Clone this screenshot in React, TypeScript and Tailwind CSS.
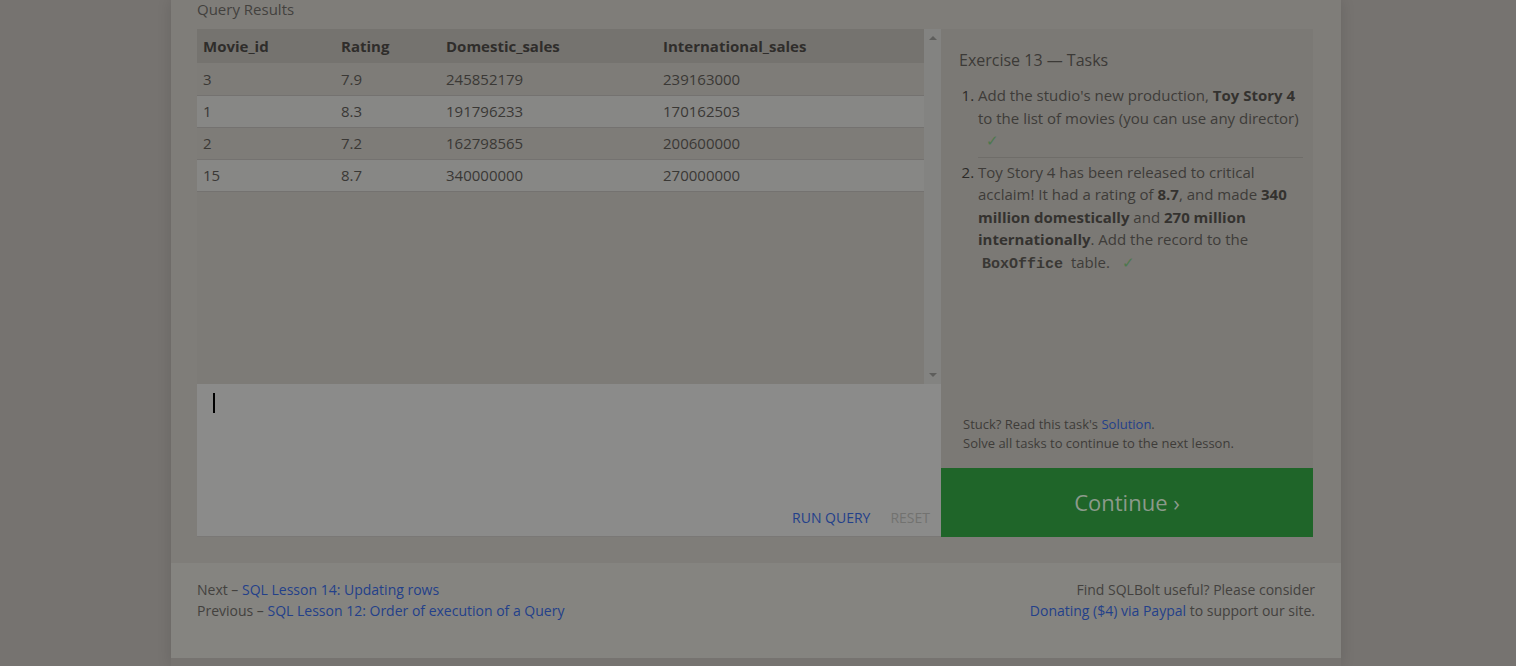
import React from 'react';

const rows = [
  ['3', '7.9', '245852179', '239163000'],
  ['1', '8.3', '191796233', '170162503'],
  ['2', '7.2', '162798565', '200600000'],
  ['15', '8.7', '340000000', '270000000'],
];

const Check = () => <span className="text-[#4d784d] ml-[8px]">✓</span>;

export default function App() {
  return (
    <div className="min-h-screen bg-[#767370] flex justify-center pr-[4px] font-['Open_Sans',sans-serif] text-[#3a3835]">
      <div className="w-[1170px] flex flex-col shadow-[0_0_14px_rgba(0,0,0,0.12)]">
        {/* Main exercise area */}
        <div className="bg-[#7f7d79] pl-[26px] pr-[28px] pb-[26px]">
          <div className="text-[15px] leading-[18px] h-[29px] text-[#43413e]">Query Results</div>
          <div className="flex">
            <div className="w-[744px] flex flex-col">
              <div className="h-[355px] flex">
                <div className="flex-1 bg-[#7d7b77]">
                  <table className="w-full text-[15px] border-collapse">
                    <thead>
                      <tr className="bg-[#75736f] h-[34px] text-left text-[#2f2d2b]">
                        <th className="font-bold pl-[6px] w-[144px]">Movie_id</th>
                        <th className="font-bold w-[105px]">Rating</th>
                        <th className="font-bold w-[217px]">Domestic_sales</th>
                        <th className="font-bold">International_sales</th>
                      </tr>
                    </thead>
                    <tbody>
                      {rows.map((r, i) => (
                        <tr key={i} className={`h-[32px] border-b border-[#747270] ${i % 2 ? 'bg-[#878785]' : 'bg-[#7e7c78]'}`}>
                          <td className="pl-[6px]">{r[0]}</td>
                          <td>{r[1]}</td>
                          <td>{r[2]}</td>
                          <td>{r[3]}</td>
                        </tr>
                      ))}
                    </tbody>
                  </table>
                </div>
                {/* scrollbar */}
                <div className="w-[17px] bg-[#838381] flex flex-col items-center justify-between py-[7px]">
                  <div className="w-0 h-0 border-x-[4px] border-x-transparent border-b-[4px] border-b-[#5e5e5c]" />
                  <div className="w-0 h-0 border-x-[4px] border-x-transparent border-t-[4px] border-t-[#5e5e5c]" />
                </div>
              </div>
              {/* editor */}
              <div className="h-[153px] bg-[#8b8b8a] border-b border-[#7a7876] flex flex-col">
                <div className="pl-[16px] pt-[9px] flex-1">
                  <div className="w-[2px] h-[20px] bg-black" />
                </div>
                <div className="flex justify-end gap-[20px] pr-[11px] pb-[8px] text-[14px]">
                  <span className="text-[#23408a]">RUN QUERY</span>
                  <span className="text-[#727270]">RESET</span>
                </div>
              </div>
            </div>

            {/* Tasks panel */}
            <div className="w-[372px] flex flex-col">
              <div className="flex-1 bg-[#7b7975] pl-[18px] pr-[10px] pt-[20px] flex flex-col">
                <div className="text-[16px] leading-[22px] text-[#3c3a37]">Exercise 13 — Tasks</div>
                <ol className="mt-[13px] text-[15px] leading-[22.5px] text-[#3e3c39] list-decimal pl-[19px] marker:text-[#2c2a28]">
                  <li className="pb-[5px] border-b border-[#6f6d69]">
                    Add the studio's new production, <b className="text-[#34322f]">Toy Story 4</b> to the list of movies (you can use any director) <Check />
                  </li>
                  <li className="pt-[3px]">
                    Toy Story 4 has been released to critical acclaim! It had a rating of <b className="text-[#34322f]">8.7</b>, and made <b className="text-[#34322f]">340</b>{' '}
                    <b className="text-[#34322f]">million domestically</b> and <b className="text-[#34322f]">270 million</b>{' '}
                    <b className="text-[#34322f]">internationally</b>. Add the record to the{' '}
                    <code className="font-['Liberation_Mono',monospace] font-bold text-[#393734] px-[4px]">BoxOffice</code> table. <Check />
                  </li>
                </ol>
                <div className="mt-auto pb-[15px] pl-[4px] text-[13px] leading-[19px] text-[#3e3c39]">
                  <div>Stuck? Read this task's <span className="text-[#23408a]">Solution</span>.</div>
                  <div>Solve all tasks to continue to the next lesson.</div>
                </div>
              </div>
              <div className="h-[69px] bg-[#1f6529] flex items-center justify-center text-[22px] text-[#8b9a8b]">
                Continue ›
              </div>
            </div>
          </div>
        </div>

        {/* Footer */}
        <div className="bg-[#858480] h-[95px] px-[26px] pt-[16px] flex justify-between text-[14px] leading-[21px] text-[#43413e]">
          <div>
            <div>Next – <span className="text-[#23408a]">SQL Lesson 14: Updating rows</span></div>
            <div>Previous – <span className="text-[#23408a]">SQL Lesson 12: Order of execution of a Query</span></div>
          </div>
          <div className="text-right">
            <div>Find SQLBolt useful? Please consider</div>
            <div><span className="text-[#23408a]">Donating ($4) via Paypal</span> to support our site.</div>
          </div>
        </div>
      </div>
    </div>
  );
}
